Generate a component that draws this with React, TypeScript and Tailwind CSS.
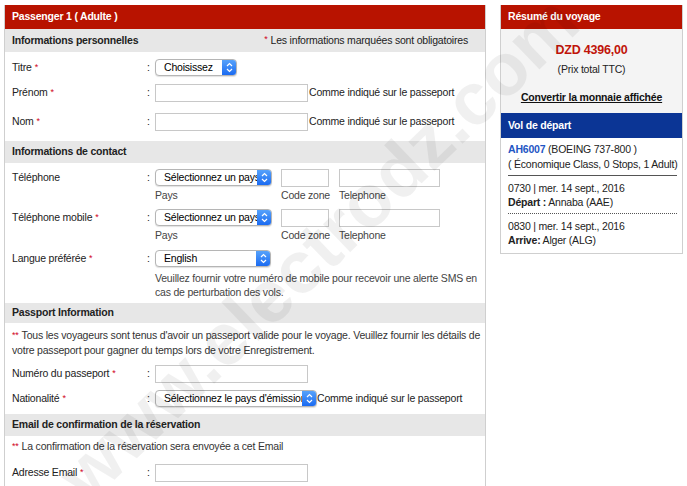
import React from 'react';

const Req: React.FC = () => <span className="text-[#d0021b] text-[9px] align-top ml-[3px]">*</span>;

const Stepper: React.FC = () => (
  <div className="w-[15px] shrink-0 self-stretch -my-px -mr-px rounded-r-[4px] bg-gradient-to-b from-[#5aa5fb] to-[#1666f0] flex items-center justify-center">
    <svg width="7" height="11" viewBox="0 0 7 11" fill="none" stroke="white" strokeWidth="1.2">
      <path d="M1 4 L3.5 1.5 L6 4" />
      <path d="M1 7 L3.5 9.5 L6 7" />
    </svg>
  </div>
);

const Select: React.FC<{ text: string; w: string }> = ({ text, w }) => (
  <div className={`${w} h-[17px] flex items-center border border-[#b5b5b5] rounded-[4px] bg-white shadow-[0_1px_1px_rgba(0,0,0,0.12)] overflow-hidden`}>
    <span className="flex-1 min-w-0 pl-[8px] whitespace-nowrap overflow-hidden text-black">{text}</span>
    <Stepper />
  </div>
);

const Input: React.FC<{ w: string }> = ({ w }) => (
  <div className={`${w} h-[18px] shrink-0 border border-[#c8c8c8] bg-white`} />
);

const Row: React.FC<{ label: string; req?: boolean; children: React.ReactNode; className?: string }> = ({
  label,
  req,
  children,
  className = '',
}) => (
  <div className={`flex items-start ${className}`}>
    <div className="w-[135px] pt-[1px] leading-[15px]">
      {label}
      {req && <Req />}
    </div>
    <div className="w-[8px] pt-[1px] leading-[15px]">:</div>
    <div className="flex-1">{children}</div>
  </div>
);

const SectionHead: React.FC<{ title: string; h: string; right?: React.ReactNode }> = ({ title, h, right }) => (
  <div className={`${h} bg-[#e7e7e7] flex items-center justify-between px-[7px]`}>
    <span className="font-bold">{title}</span>
    {right}
  </div>
);

const PhoneRow: React.FC<{ label: string; req?: boolean; className?: string }> = ({ label, req, className }) => (
  <Row label={label} req={req} className={className}>
    <div className="flex">
      <div>
        <Select text="Sélectionnez un pays" w="w-[117px]" />
        <div className="mt-[3px] text-[#444] leading-[13px]">Pays</div>
      </div>
      <div className="ml-[9px]">
        <Input w="w-[48px]" />
        <div className="mt-[2px] text-[#444] leading-[13px]">Code zone</div>
      </div>
      <div className="ml-[9px]">
        <Input w="w-[101px]" />
        <div className="mt-[2px] text-[#444] leading-[13px]">Telephone</div>
      </div>
    </div>
  </Row>
);

const App: React.FC = () => {
  return (
    <div
      className="relative w-[687px] h-[486px] overflow-hidden bg-white text-[10.5px] tracking-[-0.2px] text-[#222]"
      style={{ fontFamily: '"Liberation Sans", Arial, Helvetica, sans-serif' }}
    >
      <div className="flex pt-[5px] pl-[4px] gap-[14px]">
        {/* left form */}
        <div className="w-[482px] h-[490px] border-x border-[#cfcfcf]">
          <div className="h-[24px] bg-[#b81300] text-white font-bold flex items-center px-[7px]">Passenger 1 ( Adulte )</div>

          <SectionHead
            title="Informations personnelles"
            h="h-[23px]"
            right={
              <span className="font-normal mr-[10px]">
                <span className="text-[#d0021b] text-[9px] align-top mr-[3px]">*</span>
                Les informations marquées sont obligatoires
              </span>
            }
          />
          <div className="h-[89px] px-[7px] pt-[7px]">
            <Row label="Titre" req>
              <Select text="Choisissez" w="w-[82px]" />
            </Row>
            <Row label="Prénom" req className="mt-[8px]">
              <div className="flex items-center">
                <Input w="w-[153px]" />
                <span className="ml-[1px]">Comme indiqué sur le passeport</span>
              </div>
            </Row>
            <Row label="Nom" req className="mt-[11px]">
              <div className="flex items-center">
                <Input w="w-[153px]" />
                <span className="ml-[1px]">Comme indiqué sur le passeport</span>
              </div>
            </Row>
          </div>

          <SectionHead title="Informations de contact" h="h-[22px]" />
          <div className="h-[140px] px-[7px] pt-[6px]">
            <PhoneRow label="Téléphone" />
            <PhoneRow label="Téléphone mobile" req className="mt-[7px]" />
            <Row label="Langue préférée" req className="mt-[8px]">
              <Select text="English" w="w-[116px]" />
              <div className="mt-[4px] leading-[14px] text-[#444] whitespace-nowrap">
                Veuillez fournir votre numéro de mobile pour recevoir une alerte SMS en
                <br />
                cas de perturbation des vols.
              </div>
            </Row>
          </div>

          <SectionHead title="Passport Information" h="h-[20px]" />
          <div className="h-[91px] px-[7px] pt-[5px]">
            <div className="leading-[15px] text-[#333] whitespace-nowrap">
              <span className="text-[#d0021b] text-[9px] align-top mr-[3px]">**</span>
              Tous les voyageurs sont tenus d'avoir un passeport valide pour le voyage. Veuillez fournir les détails de
              <br />
              votre passeport pour gagner du temps lors de votre Enregistrement.
            </div>
            <Row label="Numéro du passeport" req className="mt-[7px]">
              <Input w="w-[153px]" />
            </Row>
            <Row label="Nationalité" req className="mt-[7px]">
              <div className="flex items-center">
                <Select text="Sélectionnez le pays d'émission" w="w-[162px]" />
                <span>Comme indiqué sur le passeport</span>
              </div>
            </Row>
          </div>

          <SectionHead title="Email de confirmation de la réservation" h="h-[22px]" />
          <div className="px-[7px] pt-[3px]">
            <div className="leading-[15px] text-[#333]">
              <span className="text-[#d0021b] text-[9px] align-top mr-[3px]">**</span>
              La confirmation de la réservation sera envoyée a cet Email
            </div>
            <Row label="Adresse Email" req className="mt-[10px]">
              <Input w="w-[153px]" />
            </Row>
          </div>
        </div>

        {/* right summary */}
        <div className="w-[183px] self-start border-x border-b border-[#cfcfcf]">
          <div className="h-[24px] bg-[#b81300] text-white font-bold flex items-center px-[7px]">Résumé du voyage</div>
          <div className="h-[84px] bg-[#f4f4f4] flex flex-col items-center">
            <div className="mt-[13px] text-[12.5px] font-bold text-[#c0140a] leading-[16px]">DZD 4396,00</div>
            <div className="mt-[4px] leading-[14px]">(Prix total TTC)</div>
            <div className="mt-[14px] font-bold underline leading-[14px] text-[#111]">Convertir la monnaie affichée</div>
          </div>
          <div className="h-[25px] bg-[#0b3595] text-white font-bold flex items-center px-[7px]">Vol de départ</div>
          <div className="pl-[7px] pr-[5px] pt-[4px] pb-[6px] leading-[14px]">
            <div>
              <span className="text-[#1f56c4] font-bold">AH6007</span> (BOEING 737-800 )
            </div>
            <div className="mt-[1px] whitespace-nowrap">( Économique Class, 0 Stops, 1 Adult)</div>
            <div className="mt-[4px] border-t border-[#555]" />
            <div className="mt-[5px]">0730 | mer. 14 sept., 2016</div>
            <div>
              <span className="font-bold">Départ :</span> Annaba (AAE)
            </div>
            <div className="mt-[4px] border-t border-dotted border-[#555]" />
            <div className="mt-[5px]">0830 | mer. 14 sept., 2016</div>
            <div>
              <span className="font-bold">Arrive:</span> Alger (ALG)
            </div>
          </div>
        </div>
      </div>

      {/* watermark */}
      <div className="pointer-events-none absolute left-[318px] top-[248px] -translate-x-1/2 -translate-y-1/2 -rotate-[44deg] whitespace-nowrap text-[74px] tracking-normal font-bold text-black/[0.06]">
        www.electrodz.com
      </div>
    </div>
  );
};

export default App;
